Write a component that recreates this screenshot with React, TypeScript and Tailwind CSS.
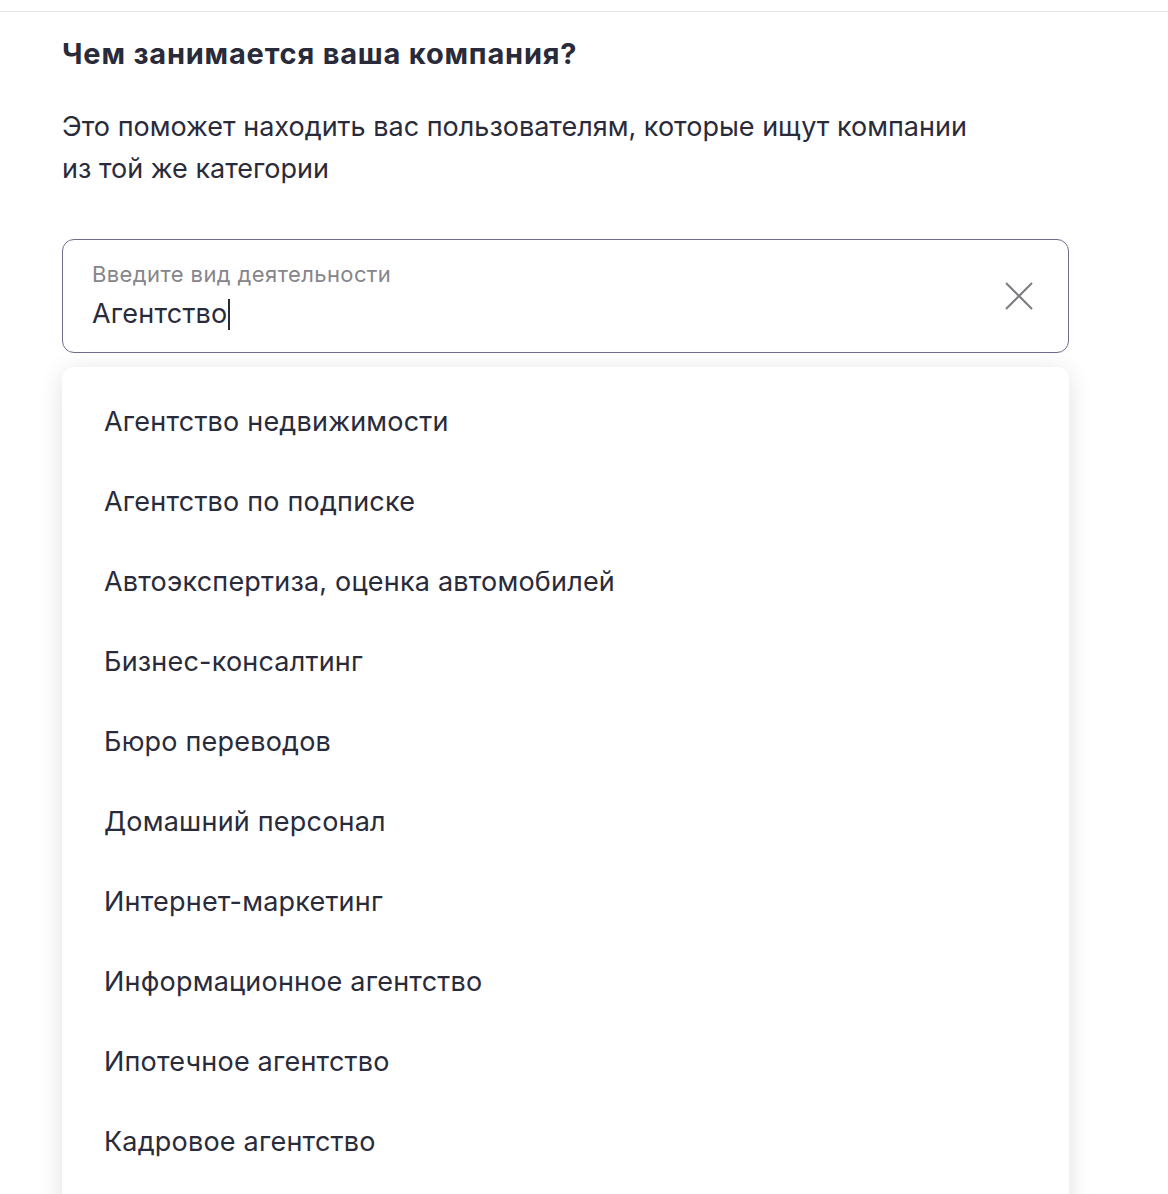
const items = [
  "Агентство недвижимости",
  "Агентство по подписке",
  "Автоэкспертиза, оценка автомобилей",
  "Бизнес-консалтинг",
  "Бюро переводов",
  "Домашний персонал",
  "Интернет-маркетинг",
  "Информационное агентство",
  "Ипотечное агентство",
  "Кадровое агентство",
];

export default function App() {
  return (
    <div className="h-[1194px] overflow-hidden bg-white font-['Inter','Noto_Sans',sans-serif] text-[#2a2b3a]">
      <div className="h-3 border-b border-[#e6e6e8]" />
      <div className="pl-[62px] pr-[100px]">
        <h1 className="mt-[25px] text-[29px] font-bold leading-[34px] tracking-[0.8px]">
          Чем занимается ваша компания?
        </h1>
        <p className="mt-[35px] w-[920px] text-[27px] leading-[42px]">
          Это поможет находить вас пользователям, которые ищут компании из той же категории
        </p>
        <div className="mt-[49px] flex h-[114px] w-[1007px] items-center rounded-[12px] border border-[#6e6d8c] pl-[29px] pr-[35px]">
          <div className="flex-1">
            <div className="text-[22px] leading-[26px] tracking-[0.4px] text-[#85858b]">Введите вид деятельности</div>
            <div className="mt-[10px] flex items-center text-[27px] leading-[34px] tracking-[0.2px]">
              Агентство
              <span className="ml-px inline-block h-[31px] w-[2px] bg-[#2a2b3a]" />
            </div>
          </div>
          <svg width="28" height="28" viewBox="0 0 28 28" fill="none">
            <path d="M1 1 L27 27 M27 1 L1 27" stroke="#7b7b80" strokeWidth="2" />
          </svg>
        </div>
        <div className="mt-[14px] w-[1007px] rounded-[12px] bg-white pb-[40px] pt-[15px] shadow-[0_4px_24px_rgba(0,0,0,0.12)]">
          {items.map((t) => (
            <div key={t} className="flex h-[80px] items-center pl-[42px] text-[27px] tracking-[0.2px]">
              {t}
            </div>
          ))}
        </div>
      </div>
    </div>
  );
}
